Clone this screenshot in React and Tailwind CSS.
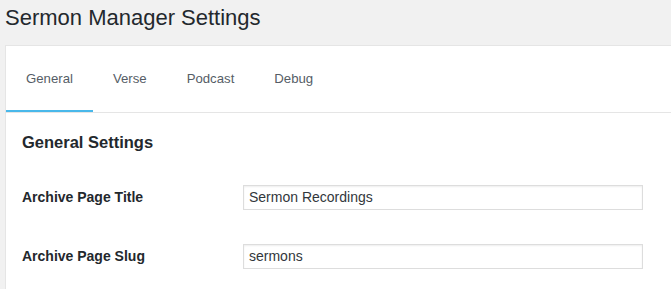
export default function App() {
  const tabs = ["General", "Verse", "Podcast", "Debug"];
  return (
    <div className="w-[671px] h-[289px] overflow-hidden bg-[#f1f1f1] font-['Liberation_Sans',Arial,sans-serif]">
      <div className="h-[45px] pl-[5px] pt-[3px]">
        <h1 className="text-[22px] leading-[30px] font-normal text-[#23282d]">Sermon Manager Settings</h1>
      </div>
      <div className="ml-[5px] w-[700px] h-[260px] bg-white border-l border-t border-[#e5e5e5]">
        <div className="flex h-[67px] border-b border-[#e5e5e5]">
          {tabs.map((t, i) => (
            <div
              key={t}
              className={
                i === 0
                  ? "h-[66px] px-[20px] flex items-center text-[13.2px] text-[#555d66] border-b-2 border-[#49b8ea] pt-[2px]"
                  : "h-[66px] px-[20px] flex items-center text-[13.2px] text-[#555d66]"
              }
            >
              {t}
            </div>
          ))}
        </div>
        <div className="px-[16px] pt-[19px]">
          <h2 className="text-[16.5px] leading-[20px] font-bold text-[#23282d]">General Settings</h2>
          <div className="flex items-center mt-[33px]">
            <label className="w-[221px] text-[14px] font-bold text-[#23282d]">Archive Page Title</label>
            <div className="w-[400px] h-[25px] border border-[#dddddd] shadow-[inset_0_1px_2px_rgba(0,0,0,0.07)] px-[5px] flex items-center text-[14px] text-[#32373c]">
              Sermon Recordings
            </div>
          </div>
          <div className="flex items-center mt-[34px]">
            <label className="w-[221px] text-[14px] font-bold text-[#23282d]">Archive Page Slug</label>
            <div className="w-[400px] h-[25px] border border-[#dddddd] shadow-[inset_0_1px_2px_rgba(0,0,0,0.07)] px-[5px] flex items-center text-[14px] text-[#32373c]">
              sermons
            </div>
          </div>
        </div>
      </div>
    </div>
  );
}
